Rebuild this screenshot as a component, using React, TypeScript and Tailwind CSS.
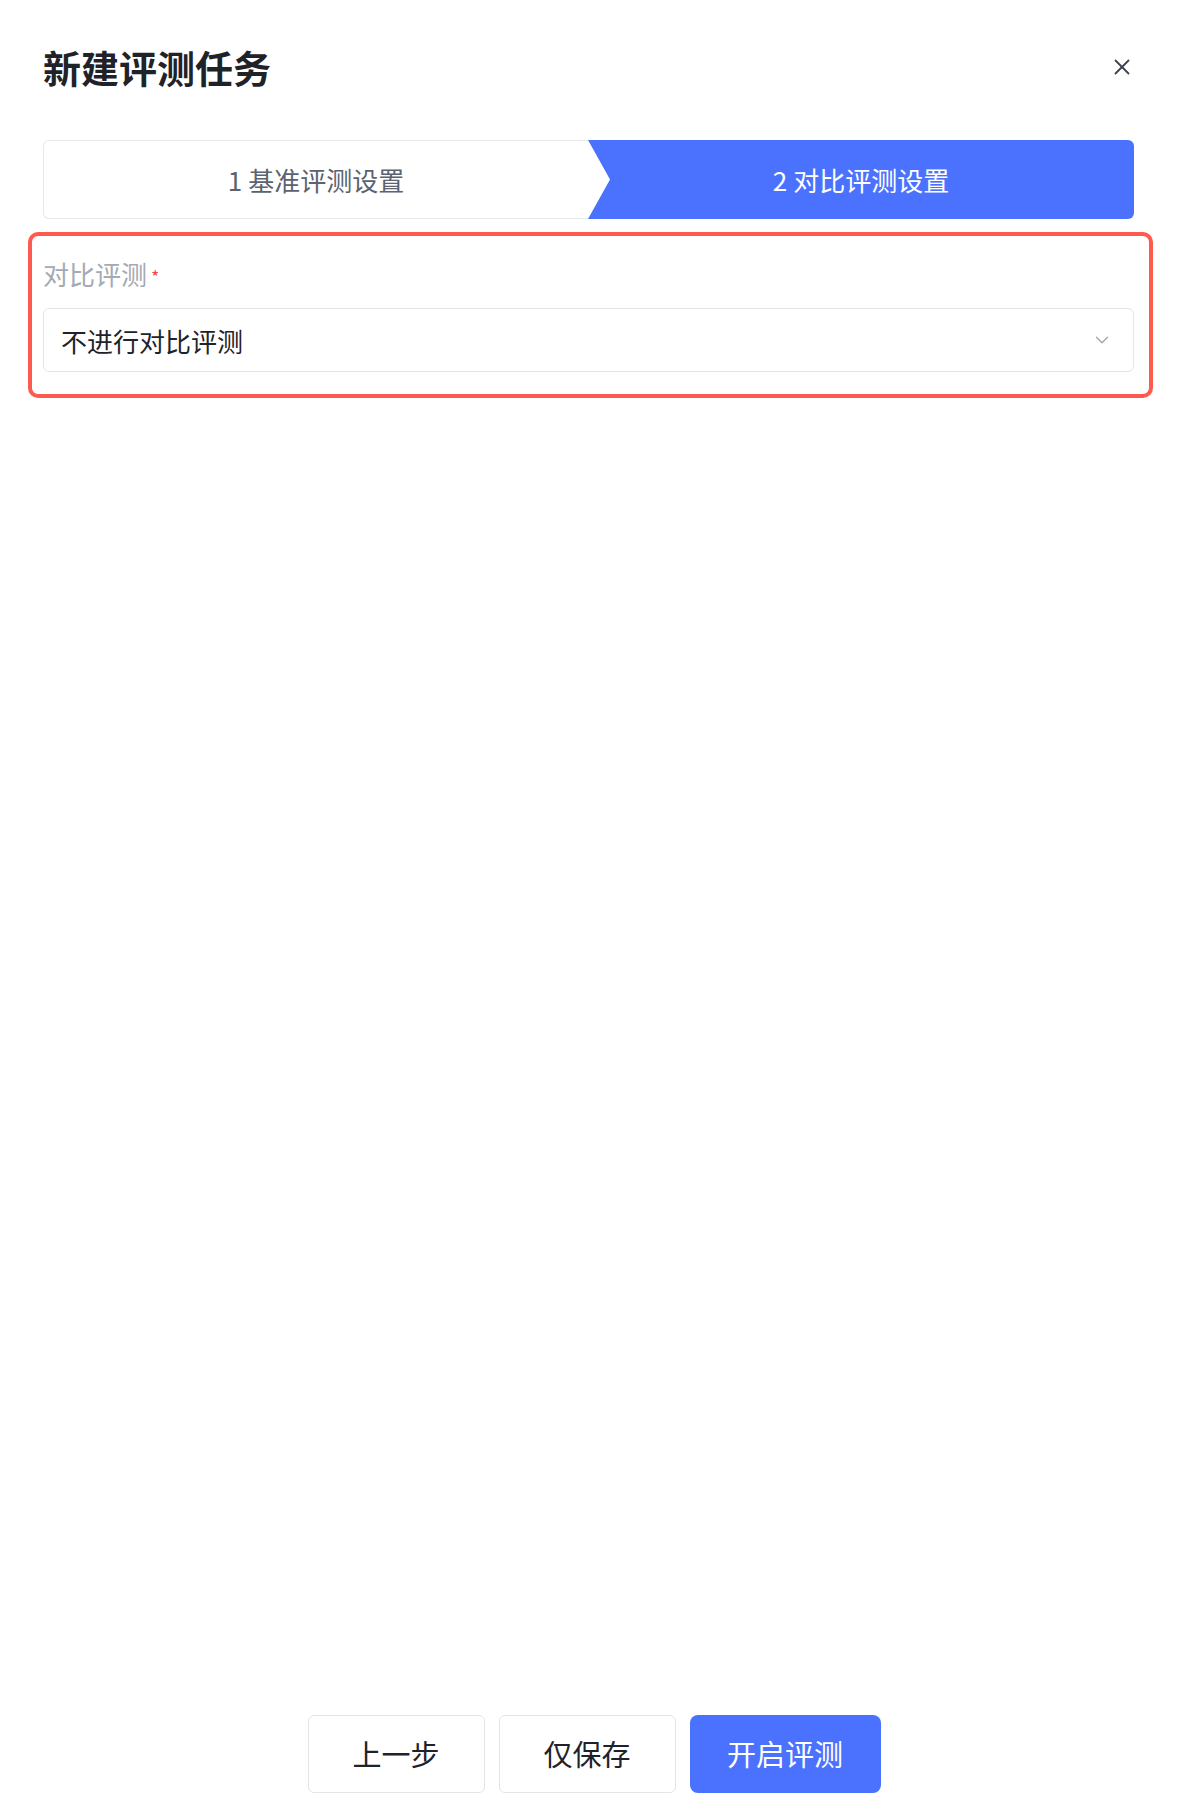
import { X, ChevronDown } from 'lucide-react'

const steps = [
  { no: 1, title: '基准评测设置' },
  { no: 2, title: '对比评测设置' },
]

export default function App() {
  return (
    <div
      className="flex h-[1816px] w-full flex-col bg-white text-[#1f2329]"
      style={{ fontFamily: '"Noto Sans CJK SC", "Noto Sans", sans-serif' }}
    >
      {/* Header */}
      <div className="mt-[47px] flex h-[40px] items-center justify-between pl-[43px] pr-[53px]">
        <h1 className="text-[38px] font-semibold leading-[40px] text-[#1f2329]">新建评测任务</h1>
        <button className="flex h-[26px] w-[26px] items-center justify-center text-[#3d4450]">
          <X className="h-[26px] w-[26px]" strokeWidth={1.7} />
        </button>
      </div>

      {/* Steps */}
      <div className="mt-[53px] flex h-[79px] pl-[43px] pr-[54px]">
        <div className="flex flex-1 items-center justify-center rounded-l-[6px] border-y border-l border-[#e6e8eb] text-[26px] text-[#5b6270]">
          {steps[0].no} {steps[0].title}
        </div>
        <div className="flex w-[546px] items-center justify-center rounded-r-[6px] bg-[#4b72fe] text-[26px] text-white [clip-path:polygon(0_0,100%_0,100%_100%,0_100%,22px_50%)]">
          {steps[1].no} {steps[1].title}
        </div>
      </div>

      {/* Compare section */}
      <div className="ml-[28px] mt-[13px] w-[1125px] rounded-[10px] border-4 border-[#ff5a4f] pb-[22px] pl-[11px] pr-[15px] pt-[19px]">
        <div className="flex h-[36px] items-center text-[26px] text-[#a4a9b3]">
          对比评测
          <span className="ml-[4px] mt-[6px] text-[18px] text-[#f04848]">*</span>
        </div>
        <div className="mt-[17px] flex h-[64px] items-center justify-between rounded-[6px] border border-[#e3e5e8] pl-[17px] pr-[20px]">
          <span className="text-[26px] text-[#1f2329]">不进行对比评测</span>
          <ChevronDown className="h-[22px] w-[22px] text-[#a4a9b3]" strokeWidth={1.6} />
        </div>
      </div>

      <div className="flex-1" />

      {/* Footer */}
      <div className="mb-[23px] flex justify-center gap-[14px]">
        <button className="h-[78px] w-[177px] rounded-[6px] border border-[#e3e5e8] bg-white text-[29px] text-[#1f2329]">
          上一步
        </button>
        <button className="h-[78px] w-[177px] rounded-[6px] border border-[#e3e5e8] bg-white text-[29px] text-[#1f2329]">
          仅保存
        </button>
        <button className="h-[78px] w-[191px] rounded-[8px] bg-[#4b72fe] text-[29px] text-white">
          开启评测
        </button>
      </div>
    </div>
  )
}
